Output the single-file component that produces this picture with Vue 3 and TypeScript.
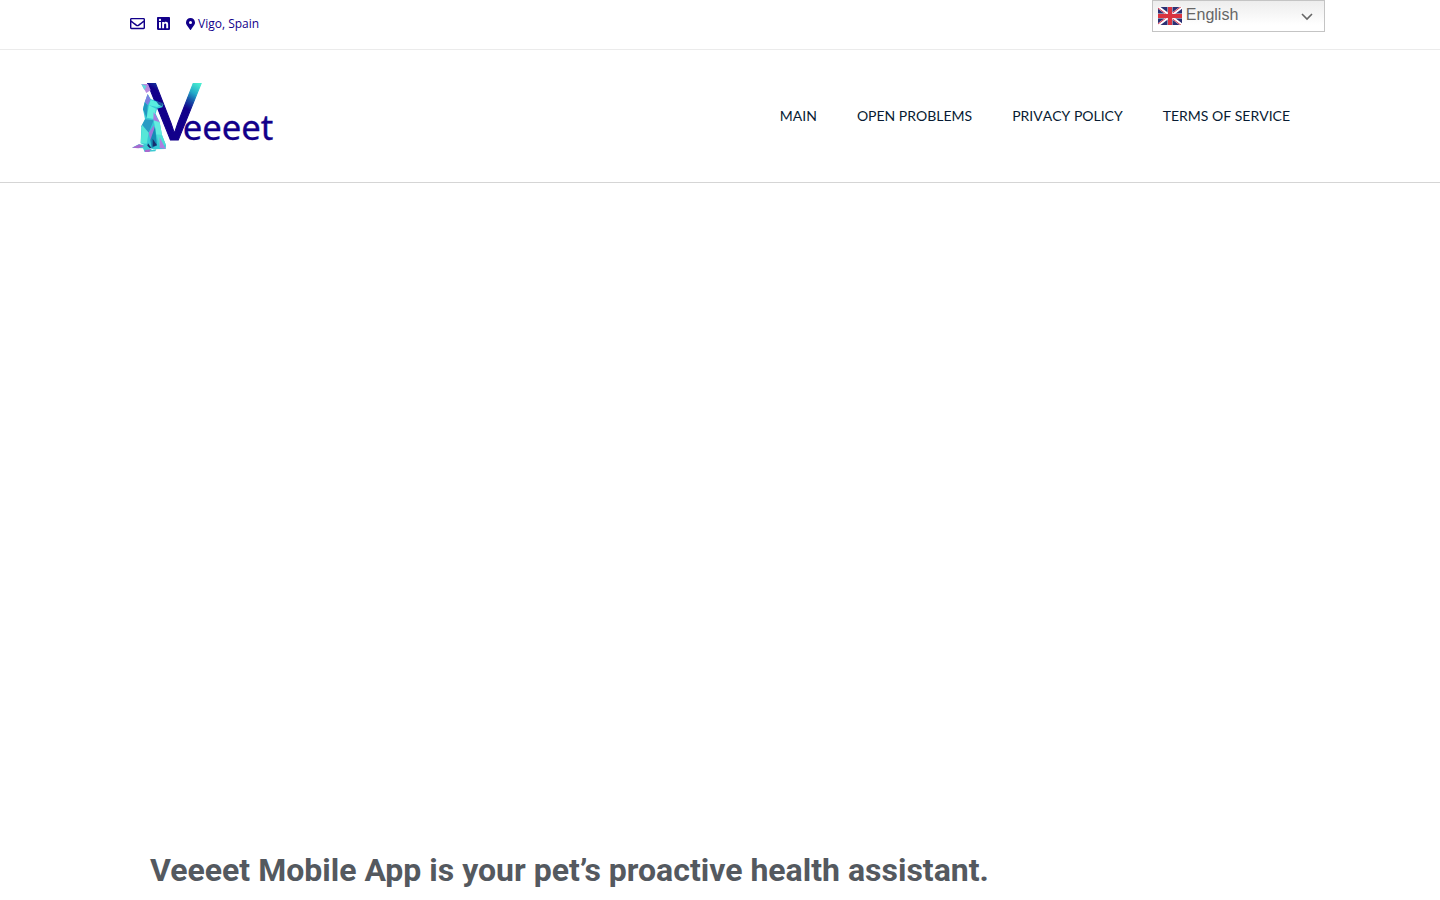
<script setup lang="ts">
import { ref } from 'vue'

interface NavItem {
  label: string
  href: string
}

const language = ref('en')

const navItems: NavItem[] = [
  { label: 'Main', href: '#main' },
  { label: 'Open Problems', href: '#open-problems' },
  { label: 'Privacy Policy', href: '#privacy-policy' },
  { label: 'Terms of Service', href: '#terms' },
]
</script>

<template>
  <div class="page">
    <div class="topbar">
      <div class="container topbar-inner">
        <a class="social mail" href="#mail" aria-label="Email">
          <svg viewBox="0 0 512 512" width="15" height="15" aria-hidden="true">
            <path fill="currentColor" d="M464 64H48C21.5 64 0 85.500 0 112v288c0 26.500 21.500 48 48 48h416c26.500 0 48-21.500 48-48V112c0-26.500-21.500-48-48-48zm0 48v40.800c-22.400 18.300-58.200 46.700-134.600 106.500-16.800 13.200-50.200 45.100-73.400 44.700-23.200.4-56.600-31.500-73.400-44.700C106.200 199.500 70.400 171.100 48 152.800V112h416zM48 400V214.400c22.900 18.300 55.400 43.900 104.900 82.600 21.900 17.200 60.100 55.200 103.100 55 42.700.2 80.500-37.200 103.100-54.900 49.500-38.800 82-64.400 104.900-82.700V400H48z" />
          </svg>
        </a>
        <a class="social linkedin" href="#linkedin" aria-label="LinkedIn">
          <svg viewBox="0 0 448 512" width="13" height="15" aria-hidden="true">
            <path fill="currentColor" d="M416 32H31.900C14.300 32 0 46.500 0 64.300v383.400C0 465.500 14.300 480 31.900 480H416c17.600 0 32-14.500 32-32.300V64.300c0-17.800-14.400-32.300-32-32.300zM135.400 416H69V202.200h66.500V416zm-33.200-243c-21.300 0-38.500-17.300-38.500-38.500S80.900 96 102.200 96c21.200 0 38.500 17.300 38.500 38.500 0 21.300-17.200 38.500-38.500 38.500zm282.100 243h-66.400V312c0-24.800-.5-56.700-34.500-56.700-34.600 0-39.900 27-39.900 54.900V416h-66.400V202.200h63.700v29.200h.9c8.900-16.800 30.600-34.500 62.900-34.500 67.200 0 79.700 44.300 79.700 101.900V416z" />
          </svg>
        </a>
        <span class="location">
          <svg viewBox="0 0 384 512" width="9" height="12" aria-hidden="true">
            <path fill="currentColor" d="M172.300 501.700C27 291 0 269.400 0 192 0 86 86 0 192 0s192 86 192 192c0 77.400-27 99-172.300 309.700-9.500 13.800-29.900 13.800-39.400 0zM192 256a64 64 0 1 0 0-128 64 64 0 0 0 0 128z" />
          </svg>
          <span>Vigo, Spain</span>
        </span>
      </div>
    </div>

    <div class="language">
      <svg class="flag" viewBox="0 0 24 18" width="24" height="18" aria-hidden="true">
        <rect width="24" height="18" fill="#2a2f73" />
        <path d="M0 0 24 18M24 0 0 18" stroke="#fff" stroke-width="3" />
        <path d="M0 1 24 19M24 -1 0 17" stroke="#d8354f" stroke-width="1" />
        <path d="M12 0V18M0 9H24" stroke="#f0e4ea" stroke-width="5" />
        <path d="M12 0V18M0 9H24" stroke="#d9333f" stroke-width="4" />
      </svg>
      <select v-model="language" aria-label="Language">
        <option value="en">English</option>
        <option value="es">Spanish</option>
      </select>
      <svg class="chevron" viewBox="0 0 12 8" width="12" height="8" aria-hidden="true">
        <path d="M1 1 6 6 11 1" fill="none" stroke="#666" stroke-width="1.600" />
      </svg>
    </div>

    <header class="header">
      <div class="container header-inner">
        <a class="logo" href="#home" aria-label="Veeeet">
          <svg viewBox="30 21 435 216" width="145" height="72" aria-hidden="true">
            <defs>
              <linearGradient id="v-fill" gradientUnits="userSpaceOnUse" x1="198" y1="100" x2="242" y2="28">
                <stop offset="0" stop-color="#12008a" />
                <stop offset="0.300" stop-color="#164aa5" />
                <stop offset="0.600" stop-color="#22a8c8" />
                <stop offset="1" stop-color="#48eed0" />
              </linearGradient>
            </defs>
            <text><tspan class="mark" x="82" y="196">V</tspan><tspan class="word" x="188" y="195">eeeet</tspan></text>
            <path fill="#b98be0" d="M64 27 84 27 92 46 79 54z" />
            <path fill="#62d8dc" d="M64 27 80 33 73 45z" />
            <path fill="#38c9d5" d="M83 57 92 72 108 78 130 88 127 97 111 101 107 116 119 142 126 180 138 211 137 222 99 223 62 205 64 154 75 133 69 103 74 82z" />
            <path fill="#7e7fe0" d="M83 57 92 75 83 91 74 82z" />
            <path fill="#58eee0" d="M92 75 130 88 111 96 87 91z" />
            <path fill="#1b579e" d="M108 78 130 85 126 94 116 89z" />
            <path fill="#2297c1" d="M74 82 83 91 80 128 69 103z" />
            <path fill="#63efdf" d="M87 91 108 101 101 132 80 128z" />
            <path fill="#aa7bdf" d="M101 111 119 142 113 158 100 134z" />
            <path fill="#2a9bc4" d="M75 133 101 136 86 173 64 154z" />
            <path fill="#57e7d8" d="M66 149 86 173 80 206 62 205z" />
            <path fill="#9c78dc" d="M86 173 102 151 105 181 92 198z" />
            <path fill="#65eddf" d="M101 136 119 142 126 180 109 179z" />
            <path fill="#168bb4" d="M105 155 111 211 95 220 91 195z" />
            <path fill="#4eded5" d="M110 179 126 180 138 211 119 214z" />
            <path fill="#b17ee0" d="M119 187 137 222 119 219z" />
            <path fill="#182d6e" d="M98 191 111 211 98 215zM84 205 95 220 80 219z" />
            <path fill="#3bcbd1" d="M36 218 56 208 80 211 96 225 109 223 106 229 74 231 69 220z" />
            <path fill="#a969cf" d="M36 218 58 208 73 214 55 220zM74 225 93 223 88 231 75 231z" />
          </svg>
        </a>
        <nav class="nav" aria-label="Primary">
          <a v-for="item in navItems" :key="item.label" :href="item.href">{{ item.label }}</a>
        </nav>
      </div>
    </header>

    <main class="main">
      <section class="hero" aria-label="Introduction"></section>
      <section class="container intro">
        <h1>Veeeet Mobile App is your pet’s proactive health assistant.</h1>
      </section>
    </main>
  </div>
</template>

<style>
body {
  background: #fff;
}
</style>

<style scoped>
.page {
  color: #54595f;
  font-family: "Open Sans", sans-serif;
}

.container {
  box-sizing: border-box;
  width: 100%;
  max-width: 1180px;
  margin: 0 auto;
}

.topbar {
  border-bottom: 1px solid #ebebeb;
}

.topbar-inner {
  display: flex;
  align-items: center;
  height: 49px;
  padding-bottom: 2px;
}

.social,
.location {
  display: flex;
  align-items: center;
  color: #12008a;
}

.linkedin {
  margin-left: 12px;
}

.location {
  gap: 3px;
  margin-left: 16px;
  font-size: 12px;
  line-height: 20px;
}

.language {
  position: absolute;
  top: 0;
  right: 8%;
  width: 173px;
  height: 32px;
}

.language select {
  box-sizing: border-box;
  width: 100%;
  height: 32px;
  padding: 0 32px 3px 33px;
  border: 1px solid #c4c4c4;
  border-radius: 0;
  appearance: none;
  background: linear-gradient(#ededed, #fff 80%);
  color: #666;
  font-family: "Liberation Sans", Arial, sans-serif;
  font-size: 16px;
}

.flag {
  position: absolute;
  top: 7px;
  left: 6px;
  pointer-events: none;
}

.chevron {
  position: absolute;
  top: 13px;
  right: 12px;
  pointer-events: none;
}

.header {
  border-bottom: 1px solid #d5d5d5;
}

.header-inner {
  display: flex;
  align-items: center;
  justify-content: space-between;
  padding: 32px 0 28px;
}

.logo svg {
  display: block;
  overflow: visible;
}

.mark {
  fill: url(#v-fill);
  stroke: url(#v-fill);
  stroke-width: 3px;
  font-family: "Liberation Sans", Arial, sans-serif;
  font-size: 244px;
}

.word {
  fill: #12008a;
  stroke: #12008a;
  stroke-width: 1px;
  font-family: "Noto Sans", sans-serif;
  font-size: 104px;
}

.nav {
  display: flex;
  gap: 40px;
  padding: 0 20px 4px 0;
  font-family: Lato, sans-serif;
  font-size: 14px;
  font-kerning: none;
  line-height: 20px;
}

.nav a {
  color: #081b33;
  text-decoration: none;
  text-transform: uppercase;
}

.hero {
  height: 659px;
}

.intro {
  padding: 8px 20px;
}

h1 {
  margin: 0;
  color: #54595f;
  font-family: Roboto, sans-serif;
  font-size: 32px;
  font-weight: 700;
  line-height: 40px;
}
</style>
